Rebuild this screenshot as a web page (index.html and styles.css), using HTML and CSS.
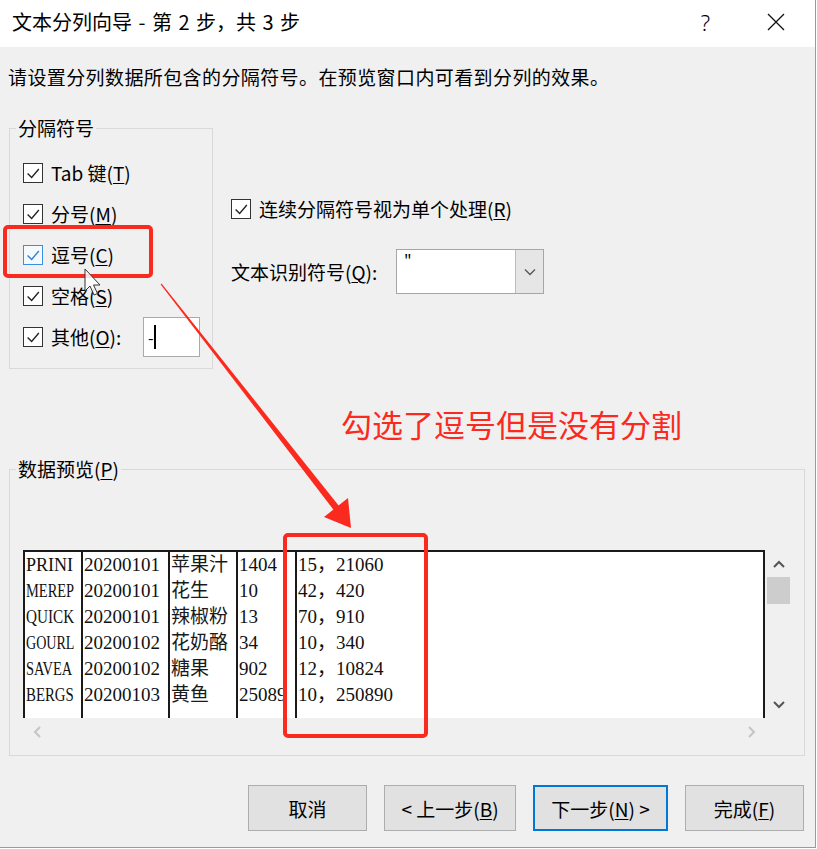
FILE: index.html
```html
<!DOCTYPE html>
<html lang="zh-CN">
<head>
<meta charset="utf-8">
<title>文本分列向导</title>
<link rel="stylesheet" href="styles.css">
</head>
<body>
<div class="dialog">
  <div class="titlebar">
    <span class="title">文本分列向导 - 第 2 步，共 3 步</span>
    <span class="help">?</span>
    <svg class="close" width="18" height="18" viewBox="0 0 18 18"><path d="M1 1 L17 17 M17 1 L1 17" stroke="#111" stroke-width="1.3" fill="none"/></svg>
  </div>

  <div class="instruction">请设置分列数据所包含的分隔符号。在预览窗口内可看到分列的效果。</div>

  <div class="options">
    <div class="group group-left">
      <div class="legend">分隔符号</div>
      <div class="checks">
        <div class="check-row">
          <span class="cb"><svg viewBox="0 0 20 20"><path d="M4 10.5 L8.5 15 L16.5 5.5"/></svg></span>
          <span>Tab 键(<u>T</u>)</span>
        </div>
        <div class="check-row">
          <span class="cb"><svg viewBox="0 0 20 20"><path d="M4 10.5 L8.5 15 L16.5 5.5"/></svg></span>
          <span>分号(<u>M</u>)</span>
        </div>
        <div class="check-row">
          <span class="cb cb-focus"><svg viewBox="0 0 20 20"><path d="M4 10.5 L8.5 15 L16.5 5.5"/></svg></span>
          <span>逗号(<u>C</u>)</span>
        </div>
        <div class="check-row">
          <span class="cb"><svg viewBox="0 0 20 20"><path d="M4 10.5 L8.5 15 L16.5 5.5"/></svg></span>
          <span>空格(<u>S</u>)</span>
        </div>
        <div class="check-row">
          <span class="cb"><svg viewBox="0 0 20 20"><path d="M4 10.5 L8.5 15 L16.5 5.5"/></svg></span>
          <span>其他(<u>O</u>):</span>
          <span class="other-input"><span class="dash">-</span><span class="caret"></span></span>
        </div>
      </div>
    </div>

    <div class="right-col">
      <div class="check-row">
        <span class="cb"><svg viewBox="0 0 20 20"><path d="M4 10.5 L8.5 15 L16.5 5.5"/></svg></span>
        <span>连续分隔符号视为单个处理(<u>R</u>)</span>
      </div>
      <div class="qualifier-row">
        <span class="qualifier-label">文本识别符号(<u>Q</u>):</span>
        <div class="combo">
          <span class="combo-value">"</span>
          <span class="combo-btn"><svg width="14" height="10" viewBox="0 0 14 10"><path d="M2 2.5 L7 7.5 L12 2.5" stroke="#555" stroke-width="1.3" fill="none"/></svg></span>
        </div>
      </div>
    </div>
  </div>

  <div class="group group-preview">
    <div class="legend">数据预览(<u>P</u>)</div>
    <div class="frame">
      <div class="table">
        <div class="col">
          <div><span class="fit" style="--sx:0.95">PRINI</span></div>
          <div><span class="fit" style="--sx:0.76">MEREP</span></div>
          <div><span class="fit" style="--sx:0.80">QUICK</span></div>
          <div><span class="fit" style="--sx:0.74">GOURL</span></div>
          <div><span class="fit" style="--sx:0.76">SAVEA</span></div>
          <div><span class="fit" style="--sx:0.78">BERGS</span></div>
        </div>
        <div class="col"><div>20200101</div><div>20200101</div><div>20200101</div><div>20200102</div><div>20200102</div><div>20200103</div></div>
        <div class="col col-cjk"><div>苹果汁</div><div>花生</div><div>辣椒粉</div><div>花奶酪</div><div>糖果</div><div>黄鱼</div></div>
        <div class="col"><div>1404</div><div>10</div><div>13</div><div>34</div><div>902</div><div>25089</div></div>
        <div class="col"><div>15，21060</div><div>42，420</div><div>70，910</div><div>10，340</div><div>12，10824</div><div>10，250890</div></div>
      </div>
      <div class="vscroll">
        <span class="sb-arrow"><svg width="14" height="10" viewBox="0 0 14 10"><path d="M2 8 L7 3 L12 8" stroke="#555" stroke-width="2" fill="none"/></svg></span>
        <span class="thumb"></span>
        <span class="sb-fill"></span>
        <span class="sb-arrow"><svg width="14" height="10" viewBox="0 0 14 10"><path d="M2 2 L7 7 L12 2" stroke="#555" stroke-width="2" fill="none"/></svg></span>
      </div>
      <div class="hscroll">
        <span class="sb-arrow-h"><svg width="10" height="14" viewBox="0 0 10 14"><path d="M8 2 L3 7 L8 12" stroke="#c4c4c4" stroke-width="2" fill="none"/></svg></span>
        <span class="sb-arrow-h"><svg width="10" height="14" viewBox="0 0 10 14"><path d="M2 2 L7 7 L2 12" stroke="#c4c4c4" stroke-width="2" fill="none"/></svg></span>
      </div>
      <div class="corner"></div>
    </div>
  </div>

  <div class="buttons">
    <button class="btn btn-cancel">取消</button>
    <button class="btn btn-back">&lt; 上一步(<u>B</u>)</button>
    <button class="btn btn-next btn-default">下一步(<u>N</u>) &gt;</button>
    <button class="btn btn-finish">完成(<u>F</u>)</button>
  </div>

  <div class="annot">
    <div class="red-box red-box-comma"></div>
    <div class="red-box red-box-col"></div>
    <div class="red-text">勾选了逗号但是没有分割</div>
    <svg class="arrow" width="817" height="849" viewBox="0 0 817 849">
      <polygon points="161.5,283.6 341.8,509.6 336.6,513.8 160.7,284.4" fill="#fa2a1e"/>
      <polygon points="351,528 324,517 348,498" fill="#fa2a1e"/>
    </svg>
    <svg class="cursor" width="20" height="30" viewBox="0 0 20 30">
      <path d="M1 1 L1 23 L6 18 L10 27 L13.5 25.5 L9.5 17 L16 17 Z" fill="#fff" fill-opacity="0.85" stroke="#333" stroke-width="1"/>
    </svg>
  </div>
</div>
</body>
</html>
```

FILE: styles.css
```css
* { box-sizing: border-box; }

html, body {
  margin: 0;
  padding: 0;
  background: #fff;
}

body {
  font-family: "Noto Sans CJK SC", "Noto Sans", sans-serif;
  font-size: 19px;
  color: #000;
}

u { text-decoration: underline; text-underline-offset: 2px; text-decoration-thickness: 1px; }

.dialog {
  position: relative;
  width: 816px;
  height: 848px;
  background: #f0f0f0;
  border-right: 1px solid #9a9a9a;
  border-bottom: 1px solid #9a9a9a;
  overflow: hidden;
}

.titlebar {
  height: 47px;
  background: #fff;
  display: flex;
  align-items: center;
  padding-left: 12px;
}

.title {
  font-size: 20px;
  line-height: 26px;
  margin-top: -3px;
  word-spacing: 2px;
}

.help {
  margin-left: auto;
  font-family: "Noto Sans", sans-serif;
  font-size: 22px;
  font-weight: 300;
  margin-top: -3px;
}

.close {
  margin-left: 57px;
  margin-right: 30px;
  margin-top: -3px;
}

.instruction {
  margin-top: 17px;
  padding-left: 8px;
  line-height: 26px;
  letter-spacing: 0.4px;
}

.options {
  display: flex;
  margin-top: 38px;
  align-items: flex-start;
}

.group {
  border: 1px solid #d9d9d9;
  margin-left: 9px;
}

.legend {
  display: table;
  margin-top: -14px;
  margin-left: -7px;
  padding: 0 2px;
  line-height: 26px;
  background: #f0f0f0;
}

.group-left {
  width: 204px;
  padding: 0 12px 11px 13px;
}

.checks {
  margin-top: 11px;
}

.check-row {
  display: flex;
  align-items: center;
  gap: 8px;
  height: 41px;
  line-height: 26px;
}

.cb {
  width: 20px;
  height: 20px;
  border: 1px solid #333;
  background: #fff;
  flex: none;
  display: flex;
}

.cb svg {
  width: 18px;
  height: 18px;
}

.cb svg path {
  fill: none;
  stroke: #222;
  stroke-width: 1.5;
}

.cb-focus {
  border-color: #3d8ee0;
  background: #f4f9fe;
}

.cb-focus svg path {
  stroke: #2f7fd0;
}

.other-input {
  margin-left: auto;
  width: 57px;
  height: 40px;
  background: #fff;
  border: 1px solid #aaa;
  display: flex;
  align-items: center;
  padding-left: 4px;
}

.dash {
  font-size: 16px;
  line-height: 20px;
}

.caret {
  width: 2px;
  height: 24px;
  background: #000;
}

.right-col {
  margin-left: 18px;
  padding-top: 60px;
}

.qualifier-row {
  display: flex;
  align-items: center;
  margin-top: 20px;
}

.qualifier-label {
  width: 165px;
  line-height: 26px;
}

.combo {
  width: 148px;
  height: 45px;
  background: #fff;
  border: 1px solid #a6a6a6;
  display: flex;
}

.combo-value {
  flex: 1;
  padding-left: 7px;
  font-size: 16px;
  line-height: 22px;
}

.combo-btn {
  width: 28px;
  background: #e6e6e6;
  border-left: 1px solid #bdbdbd;
  display: flex;
  align-items: center;
  justify-content: center;
}

.group-preview {
  margin-top: 100px;
  width: 796px;
  height: 287px;
  padding: 0 11px 10px 13px;
}

.frame {
  margin-top: 68px;
  display: grid;
  grid-template-columns: 742px 27px;
  grid-template-rows: 168px 27px;
}

.table {
  background: #fff;
  border-top: 2px solid #1a1a1a;
  border-right: 2px solid #1a1a1a;
  display: grid;
  grid-template-columns: 58px 87px 68px 59px 1fr;
  font-family: "Liberation Serif", "Noto Sans CJK SC", serif;
  font-size: 19px;
  color: #111;
}

.col {
  border-left: 2px solid #1a1a1a;
  overflow: hidden;
  white-space: nowrap;
  line-height: 26px;
  padding-left: 1px;
}

.col-cjk {
  color: #1a1a1a;
}

.fit {
  display: inline-block;
  transform: scaleX(var(--sx, 1));
  transform-origin: left center;
}

.vscroll {
  display: flex;
  flex-direction: column;
  align-items: center;
}

.sb-arrow {
  height: 27px;
  display: flex;
  align-items: center;
  justify-content: center;
}

.thumb {
  width: 23px;
  height: 27px;
  background: #cdcdcd;
}

.sb-fill {
  flex: 1;
}

.hscroll {
  display: flex;
  justify-content: space-between;
  background: #f0f0f0;
}

.sb-arrow-h {
  width: 27px;
  display: flex;
  align-items: center;
  justify-content: center;
}

.buttons {
  display: flex;
  justify-content: flex-end;
  gap: 17px;
  margin-top: 29px;
  padding-right: 11px;
}

.btn {
  height: 46px;
  font-family: "Noto Sans CJK SC", sans-serif;
  font-size: 19px;
  color: #000;
  background: #e1e1e1;
  border: 1px solid #adadad;
  padding: 0;
}

.btn-cancel { width: 119px; }
.btn-back { width: 132px; }
.btn-next { width: 135px; }
.btn-finish { width: 119px; }

.btn-default {
  border: 2px solid #0078d7;
}

.annot {
  position: absolute;
  left: 0;
  top: 0;
  width: 817px;
  height: 849px;
  pointer-events: none;
}

.red-box {
  position: absolute;
  border: 4px solid #fa2a1e;
  border-radius: 5px;
}

.red-box-comma {
  left: 3px;
  top: 225px;
  width: 150px;
  height: 53px;
}

.red-box-col {
  left: 283px;
  top: 533px;
  width: 145px;
  height: 205px;
}

.red-text {
  position: absolute;
  left: 341px;
  top: 406px;
  font-size: 31px;
  line-height: 36px;
  color: #fa2a1e;
  white-space: nowrap;
}

.arrow {
  position: absolute;
  left: 0;
  top: 0;
}

.cursor {
  position: absolute;
  left: 84px;
  top: 268px;
}
```
